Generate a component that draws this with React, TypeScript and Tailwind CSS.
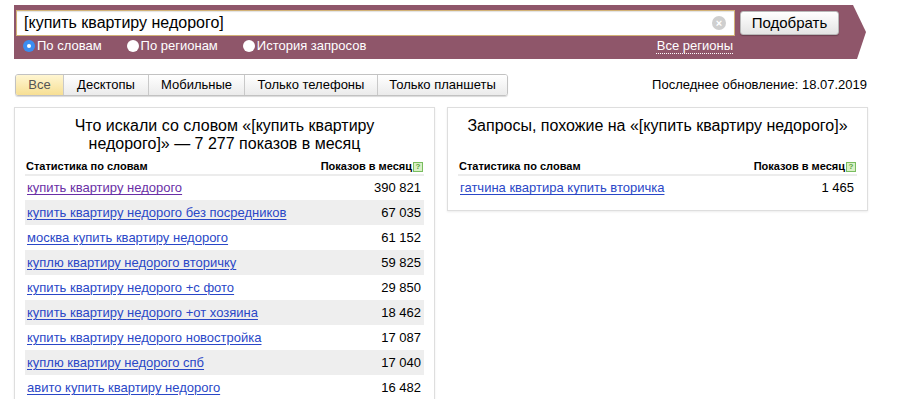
import { useState } from "react";

const rows = [
  { q: "купить квартиру недорого", n: "390 821", visited: true },
  { q: "купить квартиру недорого без посредников", n: "67 035" },
  { q: "москва купить квартиру недорого", n: "61 152" },
  { q: "куплю квартиру недорого вторичку", n: "59 825" },
  { q: "купить квартиру недорого +с фото", n: "29 850" },
  { q: "купить квартиру недорого +от хозяина", n: "18 462" },
  { q: "купить квартиру недорого новостройка", n: "17 087" },
  { q: "куплю квартиру недорого спб", n: "17 040" },
  { q: "авито купить квартиру недорого", n: "16 482" },
];

const similar = [{ q: "гатчина квартира купить вторичка", n: "1 465" }];

const tabs = ["Все", "Десктопы", "Мобильные", "Только телефоны", "Только планшеты"];
const tabWidths = ["w-[47px]", "w-[85px]", "w-[96px]", "w-[133px]", "w-[130px]"];

function Radio({ checked }: { checked?: boolean }) {
  return checked ? (
    <span className="flex h-[12px] w-[12px] items-center justify-center rounded-full bg-[#3b8df0]">
      <span className="h-[4px] w-[4px] rounded-full bg-white" />
    </span>
  ) : (
    <span className="h-[12px] w-[12px] rounded-full bg-white" />
  );
}

function Hint() {
  return (
    <span className="ml-[1px] flex h-[10px] w-[10px] items-center justify-center border border-[#79bd5f] bg-[#d9f0c6] text-[8px] leading-none font-bold text-[#5aa23f]">
      ?
    </span>
  );
}

function StatTable({ items }: { items: { q: string; n: string; visited?: boolean }[] }) {
  return (
    <div>
      <div className="flex h-[17px] items-center justify-between border-b-2 border-[#ececec] text-[11px] font-bold text-black">
        <span className="pl-[1px]">Статистика по словам</span>
        <span className="flex items-center pr-[1px]">
          Показов в месяц
          <Hint />
        </span>
      </div>
      {items.map((r, i) => (
        <div
          key={r.q}
          className={`flex items-center justify-between pl-[2px] pr-[3px] text-[13px] ${
            i === 0 ? "h-[24px]" : "h-[25px]"
          } ${i % 2 === 1 ? "bg-[#eeeeee]" : ""}`}
        >
          <a
            href="#"
            className={`underline decoration-1 underline-offset-2 ${
              r.visited ? "text-[#6a2fa6]" : "text-[#2a47c7]"
            }`}
          >
            {r.q}
          </a>
          <span className="text-black">{r.n}</span>
        </div>
      ))}
    </div>
  );
}

export default function App() {
  const [tab, setTab] = useState(0);
  const [mode, setMode] = useState(0);

  return (
    <div className="min-h-[399px] bg-white font-['Liberation_Sans',Arial,sans-serif] text-black">
      {/* search bar */}
      <div className="flex pl-[14px] pt-[5px]">
        <div className="h-[54px] w-[839px] bg-[#8f566a] pl-[2px] pt-[5px]">
          <div className="flex items-start">
            <div className="relative flex h-[26px] w-[719px] items-center border border-[#d2b277] bg-white pl-[7px] shadow-[inset_0_1px_1px_rgba(0,0,0,0.12)]">
              <span className="text-[16px] text-black">[купить квартиру недорого]</span>
              <span className="absolute right-[8px] top-[5px] flex h-[14px] w-[14px] items-center justify-center rounded-full bg-[#cfcfcf] text-[11px] leading-none font-bold text-white">
                ×
              </span>
            </div>
            <button className="ml-[5px] mt-[1px] h-[24px] w-[99px] rounded-[3px] border border-[#b9b9b9] bg-linear-to-b from-white to-[#e4e4e4] text-[15px] text-black shadow-[0_1px_1px_rgba(0,0,0,0.25)]">
              Подобрать
            </button>
          </div>
          <div className="flex h-[17px] w-[719px] items-center pl-[7px] pt-[3px] text-[13px] text-white">
            {["По словам", "По регионам", "История запросов"].map((l, i) => (
              <label
                key={l}
                onClick={() => setMode(i)}
                className={`flex cursor-pointer items-center gap-[2px] ${i > 0 ? "ml-[25px]" : ""}`}
              >
                <Radio checked={mode === i} />
                <span>{l}</span>
              </label>
            ))}
            <a
              href="#"
              className="ml-auto pr-[2px] text-white underline decoration-dotted decoration-1 underline-offset-[3px]"
            >
              Все регионы
            </a>
          </div>
        </div>
        <svg width="14" height="54" viewBox="0 0 14 54" className="block">
          <polygon points="0,0 13,27 4,54 0,54" fill="#8f566a" />
        </svg>
      </div>

      {/* tabs + update date */}
      <div className="mt-[15px] flex items-center justify-between pl-[15px] pr-[33px]">
        <div className="flex h-[22px] overflow-hidden rounded-[3px] border border-[#c2c2c2] shadow-[0_1px_1px_rgba(0,0,0,0.15)]">
          {tabs.map((t, i) => (
            <button
              key={t}
              onClick={() => setTab(i)}
              className={`${tabWidths[i]} text-[13px] ${i > 0 ? "border-l border-[#c9c9c9]" : ""} ${
                tab === i
                  ? "bg-linear-to-b from-[#fff6d2] to-[#f7df93] text-[#555]"
                  : "bg-linear-to-b from-white to-[#ebebeb] text-black"
              }`}
            >
              {t}
            </button>
          ))}
        </div>
        <span className="text-[13px] text-black">Последнее обновление: 18.07.2019</span>
      </div>

      {/* panels */}
      <div className="mt-[11px] flex items-start gap-[12px] pl-[14px]">
        <div className="w-[421px] border border-[#dedede] bg-white px-[10px] pb-[10px] pt-[9px] shadow-[0_1px_2px_rgba(0,0,0,0.08)]">
          <div className="mx-auto mb-[6px] h-[36px] max-w-[300px] text-center text-[16px] leading-[18px]">
            Что искали со словом «[купить квартиру недорого]» — 7 277 показов в месяц
          </div>
          <StatTable items={rows} />
        </div>
        <div className="w-[421px] border border-[#dedede] bg-white px-[10px] pb-[10px] pt-[9px] shadow-[0_1px_2px_rgba(0,0,0,0.08)]">
          <div className="mb-[6px] h-[36px] text-center text-[16px] leading-[18px]">
            Запросы, похожие на «[купить квартиру недорого]»
          </div>
          <StatTable items={similar} />
        </div>
      </div>
    </div>
  );
}
